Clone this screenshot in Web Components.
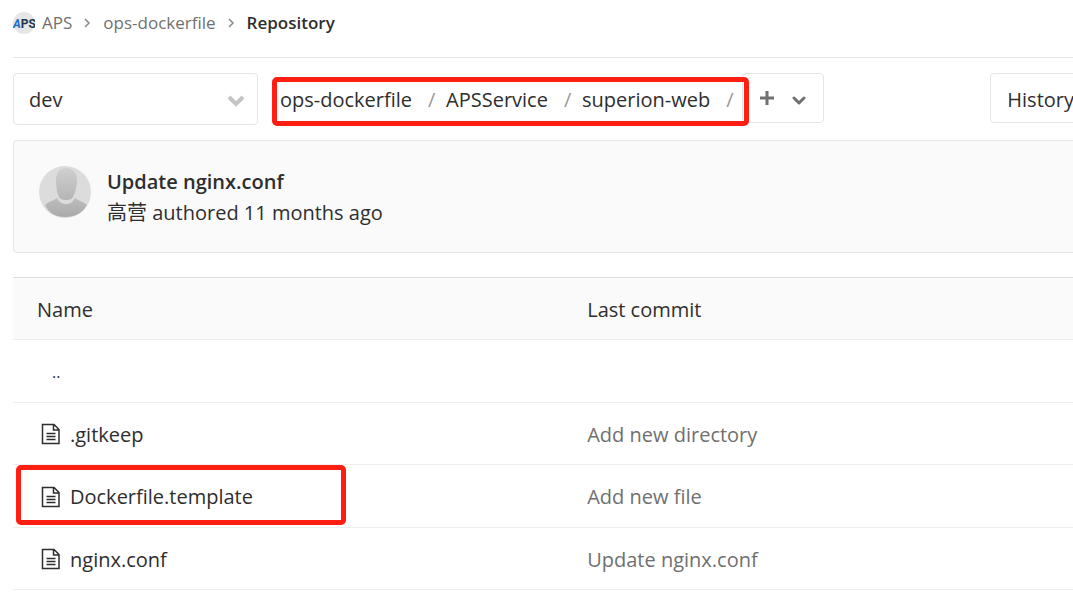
<!DOCTYPE html>
<html lang="en">
<head>
<meta charset="utf-8">
<meta name="viewport" content="width=device-width, initial-scale=1">
<title>Repository · ops-dockerfile</title>
<style>
html { background: #fff; }
body { margin: 0; overflow-x: clip; font: 20px/31px "Open Sans", "Noto Sans CJK SC", sans-serif; color: #2e2e2e; }
</style>
</head>
<body>
<repo-page></repo-page>
<script>
const define = (name, html) => customElements.define(name, class extends HTMLElement {
  constructor() {
    super();
    this.attachShadow({ mode: "open" }).innerHTML = html;
  }
});

define("group-logo", `
<style>
:host, svg { display: block; flex: none; }
text { font: 700 12px Roboto, sans-serif; fill: #24344f; }
.lead { font-style: italic; fill: #1f6fc4; }
</style>
<svg width="22" height="22" viewBox="0 0 22 22" aria-hidden="true">
  <circle cx="11" cy="11" r="11" fill="#e6e6e6"/>
  <text x="0" y="16"><tspan class="lead">A</tspan>PS</text>
</svg>`);

define("crumb-bar", `
<style>
:host { display: block; border-bottom: 1px solid #e5e5e5; }
nav { display: flex; align-items: center; height: 45px; padding-bottom: 12px; font-size: 17px; line-height: 24px; }
a { color: #707070; text-decoration: none; }
.group { display: flex; align-items: center; gap: 7px; }
strong { font-weight: 600; }
svg { flex: none; width: 8px; height: 10px; margin: 0 12px 0 11px; fill: none; stroke: #888; stroke-width: 1.500; }
</style>
<nav aria-label="Breadcrumbs">
  <a class="group" href="#aps"><group-logo></group-logo>APS</a>
  <svg viewBox="0 0 8 10"><path d="m2 1 4 4-4 4"/></svg>
  <a href="#project">ops-dockerfile</a>
  <svg viewBox="0 0 8 10"><path d="m2 1 4 4-4 4"/></svg>
  <strong>Repository</strong>
</nav>`);

define("branch-select", `
<style>
:host { display: grid; width: 245px; height: 52px; }
select { grid-area: 1 / 1; appearance: none; width: 100%; height: 100%; padding: 0 16px 0 15px; border: 1px solid #e5e5e5; border-radius: 4px; background: #fff; font: inherit; color: inherit; }
svg { grid-area: 1 / 1; place-self: center end; width: 18px; height: 12px; margin: 3px 13px 0 0; fill: none; stroke: #c4c4c4; stroke-width: 4; pointer-events: none; }
</style>
<select aria-label="Branch"><option>dev</option></select>
<svg viewBox="0 0 18 12"><path d="m2 2 7 7 7-7"/></svg>`);

define("mark-frame", `
<style>
:host { position: absolute; box-sizing: border-box; border: 5px solid #ff1e12; border-radius: 5px; pointer-events: none; }
</style>`);

define("path-trail", `
<style>
:host { position: relative; display: flex; height: 50px; }
ol { display: flex; align-items: center; margin: 0; padding: 2px 8px 0 0; list-style: none; }
li { display: flex; }
li::after { content: "/"; width: 8px; margin: 0 10px 0 16px; color: #999; }
li:last-child::after { margin-right: 0; }
a { color: inherit; text-decoration: none; }
button { display: flex; align-items: center; gap: 17px; width: 82px; padding: 0 0 0 16px; border: 1px solid #e5e5e5; border-radius: 4px; background: #fff; }
svg { display: block; fill: none; stroke: #707070; stroke-width: 3; }
svg + svg { margin-top: 4px; }
mark-frame { inset: 4px 75px -3px -8px; }
</style>
<ol>
  <li><a href="#root">ops-dockerfile</a></li>
  <li><a href="#service">APSService</a></li>
  <li><a href="#web">superion-web</a></li>
</ol>
<button aria-label="Add to tree">
  <svg width="16" height="16" viewBox="0 0 16 16"><path d="M8 1v14M1 8h14"/></svg>
  <svg width="14" height="10" viewBox="0 0 14 10"><path d="m2 3 5 5 5-5" stroke-linecap="round" stroke-linejoin="round"/></svg>
</button>
<mark-frame></mark-frame>`);

define("tree-controls", `
<style>
:host { display: flex; align-items: flex-start; gap: 22px; padding: 15px 0; }
.history { height: 50px; margin: 0 -18px 0 auto; padding: 2px 16px 0; border: 1px solid #e5e5e5; border-radius: 4px; background: #fff; font: inherit; color: inherit; }
</style>
<branch-select></branch-select>
<path-trail></path-trail>
<button class="history">History</button>`);

define("user-avatar", `
<style>:host, svg { display: block; flex: none; }</style>
<svg width="52" height="52" viewBox="0 0 52 52" role="img" aria-label="高营">
  <defs>
    <linearGradient id="h" x2="0" y2="1"><stop stop-color="#cfcfcf"/><stop offset="1" stop-color="#b5b5b5"/></linearGradient>
    <linearGradient id="b" x2="0" y2="1"><stop stop-color="#bdbdbd"/><stop offset="1" stop-color="#aaa"/></linearGradient>
    <clipPath id="c"><circle cx="26" cy="26" r="26"/></clipPath>
  </defs>
  <g clip-path="url(#c)">
    <path fill="#dcdcdc" d="M0 0h52v52H0z"/>
    <path fill="url(#h)" d="M27 2c7 0 11 5 11 12 0 6-2 13-4 17-1 2-3 3-7 3s-6-1-7-3c-2-4-3-11-3-17 0-7 3-12 10-12z"/>
    <path fill="url(#b)" d="M6 39c3-3 8-4 12-7 2 4 5 6 9 6s7-2 9-6c4 3 9 4 12 7-4 8-12 12-22 12S10 47 6 39z"/>
  </g>
</svg>`);

define("commit-panel", `
<style>
:host { display: flex; gap: 16px; margin-right: -16px; padding: 25px 25px 24px; border: 1px solid #e5e5e5; border-radius: 4px; background: #fafafa; }
a { color: inherit; text-decoration: none; }
.title { font-weight: 600; }
</style>
<user-avatar></user-avatar>
<div>
  <div><a class="title" href="#commit">Update nginx.conf</a></div>
  <div><a href="#author">高营</a> authored 11 months ago</div>
</div>`);

define("file-icon", `
<style>:host, svg { display: block; }</style>
<svg width="20" height="22" viewBox="0 0 20 22" fill="none" stroke="#2e2e2e" stroke-width="1.500" aria-hidden="true">
  <path d="M1.500 1.500h11.500l5 5v14H1.500zM12.500 1.500v5.500H18M5.500 10.500h9M5.500 13.500h9M5.500 16.500h9"/>
</svg>`);

define("file-table", `
<style>
:host { display: block; margin-top: 24px; }
table { width: 100%; table-layout: fixed; border-collapse: separate; border-spacing: 0; }
th, td { position: relative; box-sizing: border-box; height: 62px; padding: 1px 0 0 24px; border-bottom: 1px solid #eee; text-align: left; font-weight: 400; }
th { height: 63px; padding-top: 2px; border-top: 1px solid #dfdfe2; background: #fafafa; }
th:first-child { width: 52%; }
tbody tr:nth-child(odd) td { height: 63px; }
td { color: #707070; }
td + td, th + th { padding-left: 23px; }
a { color: #2e2e2e; text-decoration: none; }
.file { display: flex; align-items: center; gap: 9px; padding-left: 4px; }
.up { margin-left: 15px; font-size: 16px; }
.commit { color: inherit; }
mark-frame { inset: 0 218px 2px 3px; }
</style>
<table>
  <thead><tr><th scope="col">Name</th><th scope="col">Last commit</th></tr></thead>
  <tbody>
    <tr><td><a class="up" href="#up">..</a></td><td></td></tr>
    <tr><td><a class="file" href="#gitkeep"><file-icon></file-icon>.gitkeep</a></td><td><a class="commit" href="#c1">Add new directory</a></td></tr>
    <tr><td><a class="file" href="#dockerfile"><file-icon></file-icon>Dockerfile.template</a><mark-frame></mark-frame></td><td><a class="commit" href="#c2">Add new file</a></td></tr>
    <tr><td><a class="file" href="#nginx"><file-icon></file-icon>nginx.conf</a></td><td><a class="commit" href="#c3">Update nginx.conf</a></td></tr>
  </tbody>
</table>`);

define("repo-page", `
<style>:host { display: block; padding-left: 13px; }</style>
<main>
  <crumb-bar></crumb-bar>
  <tree-controls></tree-controls>
  <commit-panel></commit-panel>
  <file-table></file-table>
</main>`);
</script>
</body>
</html>
